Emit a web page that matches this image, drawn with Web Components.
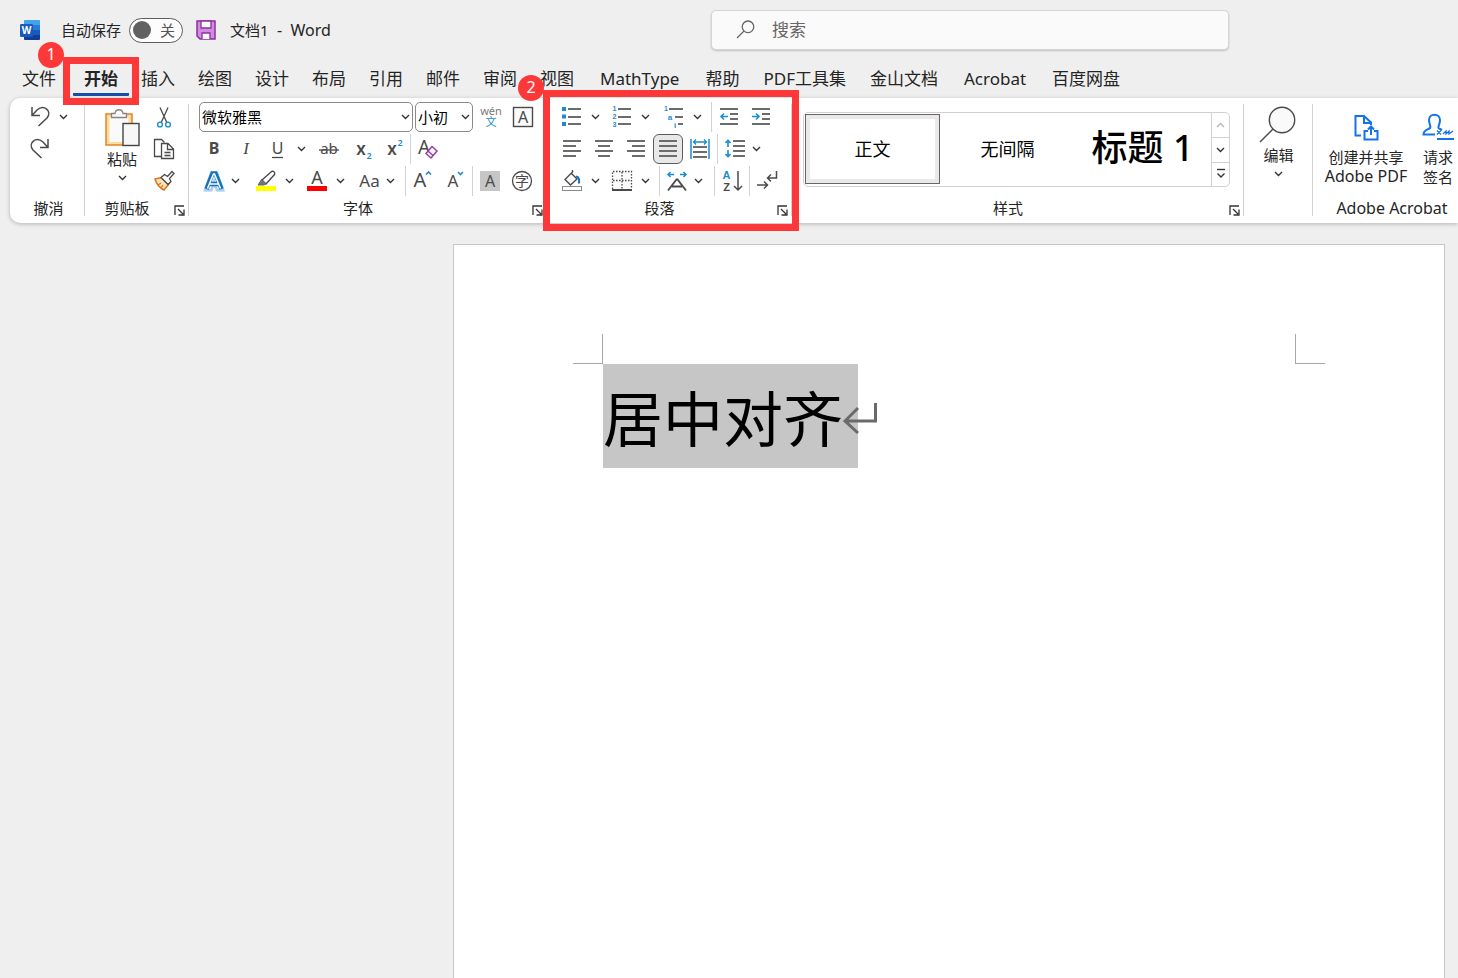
<!DOCTYPE html>
<html lang="zh-CN">
<head>
<meta charset="utf-8">
<title>文档1 - Word</title>
<style>
html,body{margin:0;height:100%}
body{font-family:"Noto Sans","Noto Sans CJK SC",sans-serif;font-size:15px;color:#242424;background:#efefef;overflow:hidden}
</style>
</head>
<body>
<word-app></word-app>
<script>
const D='#4a4a4a',G='#6c6c6c',B='#1e8bcd';
const F='font-family="Noto Sans, Noto Sans CJK SC, sans-serif"';
const lines=(a)=>`<path d="${a.map(([x,y,w])=>`M${x} ${y}h${w}`).join('')}" stroke="${G}" stroke-width="2"/>`;
const t=(x,y,s,txt,fill=D,extra='')=>`<text x="${x}" y="${y}" font-size="${s}" fill="${fill}" text-anchor="middle" ${F} ${extra}>${txt}</text>`;
const tiny=(x,y,s,txt,fill)=>`<text x="${x}" y="${y}" font-size="${s}" fill="${fill}" text-anchor="middle" font-weight="700" font-family="Liberation Sans, sans-serif">${txt}</text>`;
const p=(d,c=D,w=1.5,f='none')=>`<path d="${d}" stroke="${c}" stroke-width="${w}" fill="${f}"/>`;
/* name: [width, height, body] */
const ICONS={
 undo:[32,32,p('M8 6v8.500h8M8 14.500L13 9C20 3 28.500 10 23 17L14.500 25')],
 redo:[32,32,p('M24 6v8.500h-8M24 14.500L19 9C12 3 3.500 10 9 17L17.500 25')],
 chevron:[9,6,p('M1 1l3.500 3.500L8 1','#333',1.4)],
 chevronUp:[9,6,p('M1 5l3.500-3.500L8 5','#b5b5b5',1.4)],
 more:[10,12,p('M1 1.500h8','#333',1.4)+p('M1.500 5.500L5 9l3.500-3.500','#333',1.4)],
 launcher:[11,11,p('M1 10V1h9','#333',1.3)+p('M4 4l5 5M10 4.500V10H4.500','#333',1.3)],
 paste:[36,40,'<rect x="2" y="5" width="26" height="31" fill="#fbdc9c" stroke="#e58324" stroke-width="1.500"/><rect x="5.500" y="8" width="19" height="25" fill="#fafafa"/>'+p('M7.500 8.500V4.500h3.500c.500-5 7.500-5 8 0h3.500v4z','#858585',1.3,'#fafafa')+'<rect x="19" y="14.500" width="16" height="22" fill="#f7f7f7" stroke="#444" stroke-width="1.400"/>'],
 cut:[32,32,p('M12 6.500L18.800 21.500M20 6.500L13.200 21.500',D,1.3)+`<g fill="none" stroke="${B}" stroke-width="1.400"><circle cx="12" cy="23.500" r="2.400"/><circle cx="20" cy="23.500" r="2.400"/></g>`],
 copy:[32,32,p('M13.500 23.500h-7v-17h7l3 3',D,1.3)+p('M13.500 10.500h6.500l5.500 5.500v9.500h-12zM19.500 10.500v6h6M16.500 19.500h6M16.500 22.500h6',D,1.3,'#fafafa')],
 painter:[32,32,p('M7 14l6.500-1.500 7 7-4.500 5.500C12 23 8.500 19 7 14z','#e07314',1.5,'#fde3bd')+p('M10 20l3-2M13 23l2-3','#e07314',1.2)+p('M13 12.500l3.500-3 3 2 4.500-5 2 2-4.500 5 1.500 3-3 3z',D,1.3,'#fafafa')],
 pinyin:[32,32,t(16,14,11,'wén','#777')+t(16,25,11,'文',B)],
 border:[32,32,`<rect x="6.500" y="6.500" width="19" height="19" fill="#fafafa" stroke="${D}" stroke-width="1.400"/>`+t(16,22,16,'A')],
 bold:[32,32,t(16,21,16,'B',D,'font-weight="700"')],
 italic:[32,32,`<text x="16" y="21" font-size="17" fill="${D}" text-anchor="middle" font-family="Liberation Serif, serif" font-style="italic">I</text>`],
 underline:[32,32,t(15.500,21,16,'U')+p('M10 24.500h11',D,1.300)],
 strike:[32,32,t(16,21,15,'ab')+p('M6 17h20',D,1.300)],
 sub:[32,32,t(14,22,17,'x',D,'font-weight="600"')+t(22,26,9,'2',B,'font-weight="600"')],
 sup:[32,32,t(13,22,17,'x',D,'font-weight="600"')+t(21,13,9,'2',B,'font-weight="600"')],
 clear:[32,32,t(12,21,19,'A')+p('M14 20.500l6-7 5 4.500-6 7zM16 18l5 4.500','#9a3aa8',1.500,'#fff')],
 effect:[32,32,`<g font-family="Noto Sans, sans-serif" font-weight="700" font-size="21" text-anchor="middle"><text x="16" y="23.500" fill="#fff" stroke="#a5d0ee" stroke-width="5" paint-order="stroke">A</text></g><path d="M8.500 24L14.500 8.500h3L23.500 24M11.500 19h9" stroke="#1672bd" stroke-width="4.500"/><path d="M9.500 23.500L15.500 9h1L22.500 23.500M12 19h8" stroke="#fff" stroke-width="1.500"/>`],
 highlight:[32,32,p('M12 15l9.500-8.500c2-1 4 1 3 3L16 19z',D,1.400,'#fff')+p('M11.500 14.500l4.500 4.500-2 1H8z','#666',1,'#777')+'<rect x="6" y="21" width="20" height="5" fill="#ff0"/>'],
 color:[32,32,t(16,19,18,'A')+'<rect x="6" y="21" width="20" height="5" fill="#f00"/>'],
 caseAa:[32,32,t(14.500,22,17,'Aa')],
 grow:[32,32,t(13,22,20,'A')+p('M19 9.500l2.500-2.500 2.500 2.500',B,1.600)],
 shrink:[32,32,t(14,22,17,'A')+p('M19 7l2.500 2.500L24 7',B,1.600)],
 shade:[32,32,'<rect x="6" y="6" width="20" height="20" fill="#c6c6c6"/>'+t(16,22,16,'A')],
 circle:[32,32,`<circle cx="16" cy="16" r="9.500" fill="#fff" stroke="${D}" stroke-width="1.300"/>`+t(16,21,14,'字')],
 bullets:[32,32,`<path d="M6 6h4v4H6zM6 13.500h4v4H6zM6 21h4v4H6z" fill="${B}"/>`+lines([[12,8,13],[12,16,13],[12,23,13]])],
 numbers:[32,32,[1,2,3].map((n,i)=>tiny(8.500,10+i*8,7,n,B)).join('')+lines([[12,8,13],[12,16,13],[12,23,13]])],
 levels:[32,32,tiny(8,10,7,'1',B)+tiny(12,18.500,8,'a',B)+tiny(17,26.500,8,'i',B)+lines([[11,8,14],[17,16,8],[20,23,5]])],
 outdent:[32,32,lines([[7,8,18],[17,13,8],[17,18,8],[7,23,18]])+p('M15 15.500H8M11 12.500l-3 3 3 3',B,1.600)],
 indent:[32,32,lines([[7,8,18],[17,13,8],[17,18,8],[7,23,18]])+p('M7 15.500h7M11 12.500l3 3-3 3',B,1.600)],
 left:[32,32,lines([[7,8,18],[7,13,13],[7,18,18],[7,23,13]])],
 center:[32,32,lines([[7,8,18],[10,13,12],[7,18,18],[10,23,12]])],
 right:[32,32,lines([[7,8,18],[12,13,13],[7,18,18],[12,23,13]])],
 justify:[32,32,lines([[7,8,18],[7,13,18],[7,18,18],[7,23,18]])],
 distribute:[32,32,lines([[9,14,14],[9,19,14],[9,24,14]])+p('M7 6v20M25 6v20',B,1.500)+p('M9.500 9h13M12 6.500L9.500 9l2.500 2.500M20 6.500L22.500 9 20 11.500',B,1.300)],
 spacing:[32,32,lines([[14,8,12],[14,13,12],[14,18,12],[14,23,12]])+p('M9 7.500V14M6.500 10L9 7.500l2.500 2.500M9 17v6.500M6.500 21L9 23.500l2.500-2.500',B,1.600)],
 fill:[32,32,p('M15 8l6 6-6.500 6-5.500-5.500L16.500 7V5',D,1.400,'#fafafa')+p('M20 11.500c3 0 3.500 3 3 7',"#1672bd",2)+'<rect x="6.500" y="21.500" width="19" height="4" fill="#fff" stroke="#8a8a8a"/>'],
 borders:[32,32,`<path d="M6.500 24V6.500h19V24M16 7v17M7 15.500h18" fill="#fafafa" stroke="${D}" stroke-width="1.300" stroke-dasharray="1.500 1.500"/>`+p('M6 25h20',D,2)],
 scale:[32,32,p('M7 25.500L15.500 14.500h1L25 25.500M11 21.500h10',D,1.800)+p('M13 9.500H7M9.500 7L7 9.500 9.500 12M19 9.500h6M22.500 7L25 9.500 22.500 12',B,1.500)],
 sort:[32,32,tiny(10.500,14,11,'A',B)+tiny(10.500,26,11,'Z',D)+p('M22 6v19M18 21l4 4 4-4',D,1.500)],
 marks:[32,32,p('M25.500 6v7H17M20 9.500L16.500 13l3.500 3.500M6 20h10.500M13 16.500l3.500 3.500-3.500 3.500',D,1.500)],
 find:[40,40,`<circle cx="23" cy="15" r="12.700" fill="#fafafa" stroke="${D}" stroke-width="1.400"/>`+p('M14 24L1 37',D,1.500)],
 search:[20,20,p('M8 11L1 18','#666',1.300)+'<circle cx="12" cy="6.800" r="5.800" fill="none" stroke="#666" stroke-width="1.300"/>'],
 share:[28,28,p('M9 22.500H3.500V3H12l7 6.500V12M12 3.500V10h6','#1473e6',2)+p('M16 18h-3.500v8.500h13V18H22M19 22v-8M16 16.500l3-3 3 3','#1473e6',2)],
 sign:[32,30,p('M13 22.500H1.500c0-4 3-4.500 6-6C10 15 7 13 7 8c0-7 11-7 11 0 0 5-3 7-1 8.500l3 1.500','#1473e6',2)+p('M15 18.500l4 4M19 18.500l-4 4M21 22l3-3v3l3-3v3l4-3','#1473e6',1.300)+p('M15 27h17','#1473e6',2)],
 save:[20,20,p('M1 1h18v18H4l-3-3z','#8e2f9d',1.500,'#d18be0')+p('M5 1h10v7H5zM6 19v-6h8v6','#8e2f9d',1.300,'#f7f7f7')],
 word:[20,20,'<rect x="4" width="16" height="20" rx="1.500" fill="#2b7cd3"/><path d="M4 5V1.500Q4 0 5.500 0h13Q20 0 20 1.500V5z" fill="#41a5ee"/><path d="M4 10h16v5H4z" fill="#185abd"/><path d="M4 15h16v3.500q0 1.500-1.500 1.500h-13Q4 20 4 18.500z" fill="#103f91"/><rect y="4" width="13" height="13" rx="1.200" fill="#185abd"/><text x="6.500" y="14" font-size="10" font-weight="700" text-anchor="middle" fill="#fff" font-family="Noto Sans, sans-serif">W</text>'],
 enter:[34,34,p('M32.500 1v18H3M15 6L2 19l13 12','#6a6a6a',3)]
};
function define(name,html,init){
  const tpl=document.createElement('template');tpl.innerHTML=html;
  customElements.define(name,class extends HTMLElement{
    connectedCallback(){
      if(this.shadowRoot)return;
      this.attachShadow({mode:'open'}).append(tpl.content.cloneNode(true));
      if(init)init(this,this.shadowRoot);
    }
  });
}
const RESET='button{font:inherit;color:inherit;background:none;border:0;padding:0;margin:0;cursor:default}';

define('w-icon','<style>:host{display:inline-flex;flex:none}svg{display:block}</style><div></div>',(h,r)=>{
  const [w,hh,b]=ICONS[h.getAttribute('name')];
  r.querySelector('div').innerHTML=`<svg width="${w}" height="${hh}" viewBox="0 0 ${w} ${hh}" fill="none" aria-hidden="true">${b}</svg>`;
});

define('tool-button',`<style>${RESET}
:host{display:block;width:32px;height:32px}
:host([icon=chevron]){width:15px}
button{width:100%;height:100%;display:grid;place-items:center}
:host([pressed]) button{position:relative;isolation:isolate}
:host([pressed]) button::before{content:"";position:absolute;z-index:-1;inset:1px;border:1px solid #5c5c5c;border-radius:6px;background:#e9e8e8}
</style><button type="button"></button>`,(h,r)=>{
  const b=r.querySelector('button'),i=document.createElement('w-icon');
  i.setAttribute('name',h.getAttribute('icon'));b.append(i);
  b.setAttribute('aria-label',h.getAttribute('label')||h.getAttribute('icon'));
  if(h.hasAttribute('pressed'))b.setAttribute('aria-pressed','true');
});

define('big-button',`<style>${RESET}
:host{display:block}
button{width:100%;display:flex;flex-direction:column;align-items:center;line-height:20px;white-space:nowrap}
.icon{height:40px;display:flex;align-items:center}
.drop{height:18px;display:flex;align-items:center}
:host(:not([drop])) .drop{display:none}
</style><button type="button"><span class="icon"></span><slot></slot><span class="drop"><w-icon name="chevron"></w-icon></span></button>`,(h,r)=>{
  const i=document.createElement('w-icon');i.setAttribute('name',h.getAttribute('icon'));r.querySelector('.icon').append(i);
});

define('tool-row','<style>:host{display:grid;height:32px;grid-auto-flow:column;justify-content:start;align-items:center}</style><slot></slot>',h=>{
  if(h.hasAttribute('tracks'))h.style.gridTemplateColumns=h.getAttribute('tracks').split(' ').map(n=>n+'px').join(' ');
});
define('tool-divider','<style>:host{display:block;width:1px;height:30px;background:#d1d1d1}</style>');

define('combo-box',`<style>
:host{display:grid;align-items:center;height:30px;box-sizing:border-box;border:1px solid #8a8a8a;border-radius:5px;background:#fff}
select{grid-area:1/1;appearance:none;border:0;background:none;margin:0;padding:0 0 0 2px;width:100%;height:28px;font:inherit;color:#000}
w-icon{grid-area:1/1;justify-self:end;margin-right:2px;pointer-events:none}
</style><select><option></option></select><w-icon name="chevron"></w-icon>`,(h,r)=>{
  const s=r.querySelector('select');s.setAttribute('aria-label',h.getAttribute('label'));
  s.options[0].textContent=h.getAttribute('value');
});

define('callout-mark',`<style>
:host{position:absolute;z-index:5;box-sizing:border-box;border:7px solid #fd3838;pointer-events:none}
span{position:absolute;left:-32px;top:-22px;width:26px;height:26px;border-radius:50%;background:#fd3838;color:#fff;font-size:16px;font-weight:400;line-height:25px;text-align:center}
</style><span><slot></slot></span>`);

define('ribbon-group',`<style>${RESET}
:host{position:relative;display:flex;flex-direction:column;box-sizing:border-box;height:125px;padding-top:3px}
:host([divided])::after{content:"";position:absolute;right:0;top:6px;width:1px;height:112px;background:#d1d1d1}
.body{height:96px}
footer{display:flex;align-items:center;height:22px}
.label{flex:1;text-align:center;white-space:nowrap;line-height:22px}
.label.en{font-size:16px;line-height:24px}
button{width:20px;height:22px;display:grid;place-items:center;padding-top:5px;box-sizing:border-box}
:host(:not([launcher])) button{display:none}
</style><div class="body"><slot></slot></div><footer><span class="label"></span><button type="button" aria-label="更多设置"><w-icon name="launcher"></w-icon></button></footer><slot name="mark"></slot>`,(h,r)=>{
  const l=r.querySelector('.label');l.textContent=h.getAttribute('label')||'';
  l.classList.toggle('en',/^\w/.test(l.textContent));
});

define('title-bar',`<style>
:host{display:flex;align-items:center;height:60px;padding:0 229px 0 20px}
label.auto{display:flex;align-items:center;gap:8px;margin-left:21px;line-height:20px}
.track{display:flex;align-items:center;justify-content:space-between;box-sizing:border-box;width:54px;height:25px;padding:0 7px 0 3px;border:1px solid #5c5c5c;border-radius:13px;background:#fdfdfd;color:#555}
.track input{appearance:none;margin:0;width:18px;height:18px;border-radius:50%;background:#616161}
.save{margin:0 14px 0 13px}
h1{margin:0;font-size:15px;font-weight:400;white-space:pre}
h1 span{font-size:16px}
.search{display:flex;align-items:center;box-sizing:border-box;width:518px;height:40px;margin-left:auto;padding:0 24px;gap:16px;background:#fafafa;border:1px solid #d6d6d6;border-radius:5px;box-shadow:0 1px 2px #0003}
.search input{flex:1;border:0;padding:0 0 2px;background:none;font:inherit;font-size:17px;outline:0}
.search input::placeholder{color:#666;opacity:1}
</style>
<w-icon name="word"></w-icon>
<label class="auto">自动保存<span class="track"><input type="checkbox" role="switch">关</span></label>
<w-icon class="save" name="save"></w-icon>
<h1>文档1<span>  -  Word</span></h1>
<label class="search"><w-icon name="search"></w-icon><input type="search" placeholder="搜索" aria-label="搜索"></label>`);

define('tab-strip',`<style>${RESET}
:host{display:block;height:38px;padding-left:11px;font-size:17px}
nav{display:flex;gap:1px}
.tab{position:relative}
button{display:block;height:36px;padding:0 11px;line-height:38px;white-space:nowrap;box-sizing:border-box}
.latin button{padding:0 14px}
.mixed button{padding:0 12px}
.active{margin-left:5px}
.active button{font-weight:700;border-bottom:3px solid #174fa8;border-radius:1px}
callout-mark{left:-10px;top:-3px;width:76px;height:48px}
</style><nav role="tablist"></nav>`,(h,r)=>{
  const nav=r.querySelector('nav');
  '文件 开始 插入 绘图 设计 布局 引用 邮件 审阅 视图 MathType 帮助 PDF工具集 金山文档 Acrobat 百度网盘'.split(' ').forEach((n,i)=>{
    const d=document.createElement('div');d.className='tab'+(i===1?' active':'')+(/^\w+$/.test(n)?' latin':/^\w/.test(n)?' mixed':'');
    d.innerHTML=`<button type="button" role="tab" aria-selected="${i===1}">${n}</button>`+(i===1?'<callout-mark>1</callout-mark>':'');
    nav.append(d);
  });
});

define('style-gallery',`<style>${RESET}
:host{display:grid;grid-template-columns:1fr 18px;box-sizing:border-box;height:75px;border:1px solid #d1d1d1;border-radius:5px;color:#000;background:#fff}
.items{display:grid;grid-template-columns:repeat(3,1fr);padding:1px}
.items button{box-sizing:border-box;height:70px;padding-bottom:3px;font-size:18px;white-space:nowrap}
.items .on{border:1px solid #666;box-shadow:inset 0 0 0 4px #eae8e8}
.items .title{font-size:36px;font-weight:500;padding-bottom:8px}
.scroll{display:grid;grid-template-rows:1fr 1fr 1fr;border-left:1px solid #d1d1d1}
.scroll button{display:grid;place-items:center}
.scroll button+button{border-top:1px solid #d1d1d1}
</style>
<div class="items"><button type="button" class="on">正文</button><button type="button">无间隔</button><button type="button" class="title">标题 1</button></div>
<div class="scroll"><button type="button" aria-label="上一行"><w-icon name="chevronUp"></w-icon></button><button type="button" aria-label="下一行"><w-icon name="chevron"></w-icon></button><button type="button" aria-label="其他"><w-icon name="more"></w-icon></button></div>`);

const tb=(s)=>s.split(' ').map(n=>n==='|'?'<tool-divider></tool-divider>':n==='v'?'<tool-button icon="chevron" label="展开"></tool-button>':`<tool-button icon="${n}"${n==='justify'?' pressed':''}></tool-button>`).join('');
define('ribbon-bar',`<style>
:host{display:flex;margin-left:10px;background:#fff;border-radius:10px 0 0 10px;box-shadow:0 1px 4px #00000040}
.undo{width:75px;padding-left:2px}
.undo tool-row{padding-left:12px}
.clip{width:104px}
.clip .cols{display:grid;grid-template-columns:48px 32px;column-gap:2px;padding-left:13px}
.clip big-button{padding-top:8px}
.font{width:358px}
.font tool-row{padding-left:9px}
.font tool-row.boxes{padding-left:10px;column-gap:2px}
.font .last{padding-left:0}
.para{width:245px}
.para tool-row{padding-left:9px}
.para callout-mark{left:-4px;top:-8px;width:256px;height:141px}
.styles{flex:1;min-width:300px}
style-gallery{margin:11px 14px 0 11px}
.edit{width:69px}
.edit big-button{padding-top:4px}
.acro{width:158px;margin-right:-13px}
.acro .cols{display:grid;grid-template-columns:106px 38px;justify-content:start}
.acro big-button{padding-top:6px}
.en{font-size:16px;line-height:19px}
</style>
<ribbon-group class="undo" label="撤消" divided><tool-row tracks="32 15">${tb('undo v')}</tool-row><tool-row>${tb('redo')}</tool-row></ribbon-group>
<ribbon-group class="clip" label="剪贴板" launcher divided><div class="cols"><big-button icon="paste" drop>粘贴</big-button><div>${tb('cut copy painter')}</div></div></ribbon-group>
<ribbon-group class="font" label="字体" launcher>
<tool-row class="boxes" tracks="214 58 64"><combo-box label="字体" value="微软雅黑"></combo-box><combo-box label="字号" value="小初"></combo-box><tool-row class="last">${tb('pinyin border')}</tool-row></tool-row>
<tool-row tracks="32 32 32 19 34 32 31 2 32">${tb('bold italic underline v strike sub sup | clear')}</tool-row>
<tool-row tracks="30 22 32 19 32 22 28 22 2 32 33 2 32 32">${tb('effect v highlight v color v caseAa v | grow shrink | shade circle')}</tool-row></ribbon-group>
<ribbon-group class="para" label="段落" launcher divided>
<tool-row tracks="32 18 32 20 32 21 2 32 32">${tb('bullets v numbers v levels v | outdent indent')}</tool-row>
<tool-row tracks="32 32 32 32 33 2 30 15">${tb('left center right justify distribute | spacing v')}</tool-row>
<tool-row tracks="32 18 32 21 2 30 23 2 33 2 32">${tb('fill v borders v | scale v | sort | marks')}</tool-row>
<callout-mark slot="mark">2</callout-mark></ribbon-group>
<ribbon-group class="styles" label="样式" launcher divided><style-gallery></style-gallery></ribbon-group>
<ribbon-group class="edit" divided><big-button icon="find" drop>编辑</big-button></ribbon-group>
<ribbon-group class="acro" label="Adobe Acrobat"><div class="cols"><big-button icon="share"><span>创建并共享</span><span class="en">Adobe PDF</span></big-button><big-button icon="sign"><span>请求</span><span>签名</span></big-button></div></ribbon-group>`);

define('doc-page',`<style>
:host{flex:1;display:flex;justify-content:flex-end;padding:21px 13px 0 0}
article{box-sizing:border-box;width:992px;background:#fff;border:1px solid #c6c6c6;border-bottom:0;padding:89px 119px 0}
.crops{display:flex;justify-content:space-between}
.crops i{box-sizing:border-box;width:30px;height:30px;border:solid #a8a8a8;border-width:0 1px 1px 0}
.crops i+i{border-width:0 0 1px 1px}
p{display:flex;align-items:center;margin:0 30px;color:#000;font-size:60px;line-height:98px}
.sel{box-sizing:border-box;height:104px;width:255px;padding-top:6px;background:#c6c6c6;display:flex;align-items:center;white-space:nowrap}
</style><article><div class="crops"><i></i><i></i></div><p><span class="sel">居中对齐<w-icon name="enter"></w-icon></span></p></article>`);

define('word-app',`<style>:host{display:flex;flex-direction:column;height:100vh;overflow:hidden}</style>
<title-bar></title-bar><tab-strip></tab-strip><ribbon-bar></ribbon-bar><doc-page></doc-page>`);
</script>
</body>
</html>
